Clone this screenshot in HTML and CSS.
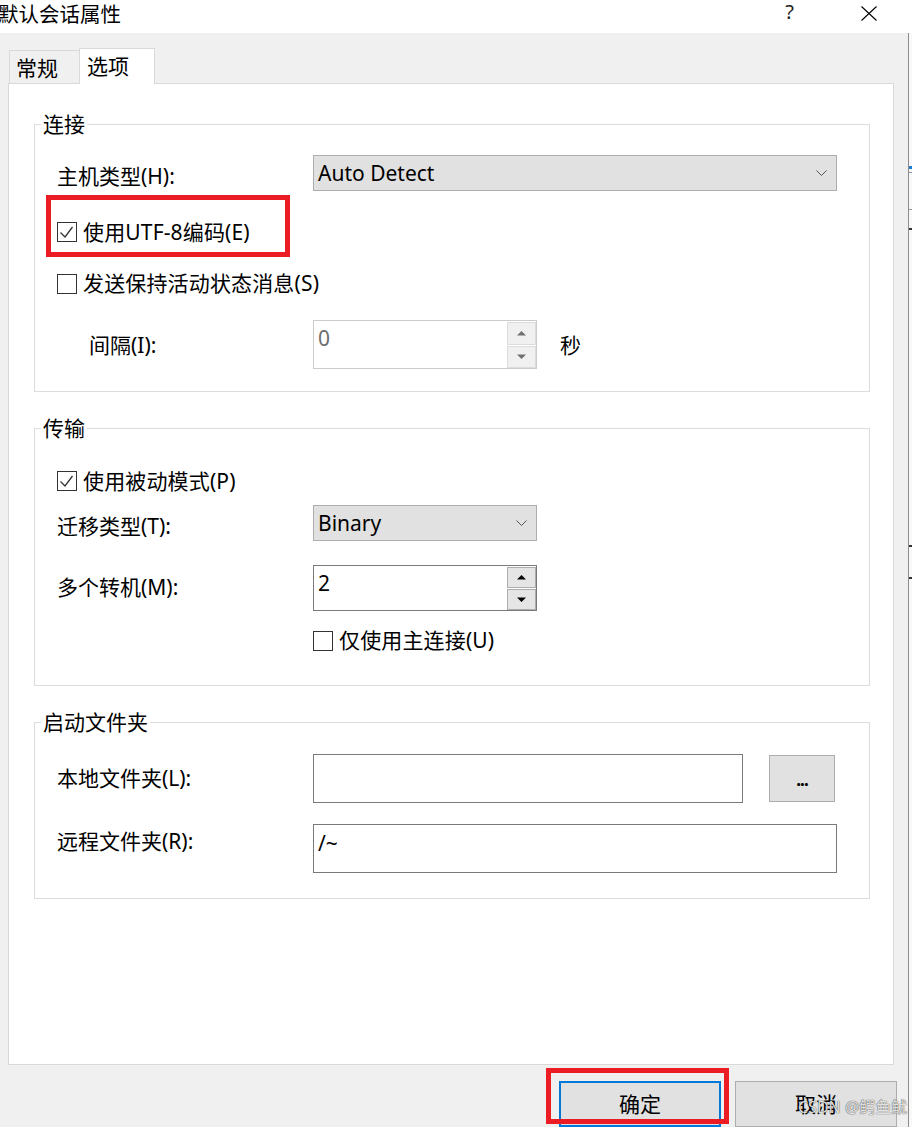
FILE: index.html
```html
<!DOCTYPE html>
<html lang="zh-CN">
<head>
<meta charset="utf-8">
<title>默认会话属性</title>
<link rel="stylesheet" href="styles.css">
</head>
<body>
<div class="titlebar">
  <div class="title">默认会话属性</div>
  <div class="help">?</div>
  <svg class="close" width="16" height="15" viewBox="0 0 16 15"><path d="M0.5 0.5 L15.5 14.5 M15.5 0.5 L0.5 14.5" stroke="#000" stroke-width="1.1" fill="none"/></svg>
</div>
<div class="main">
  <div class="dialog">
    <div class="tabs">
      <div class="tab">常规</div>
      <div class="tab active">选项</div>
    </div>
    <div class="panel">
      <div class="group g1">
        <span class="gtitle">连接</span>
        <div class="row">
          <span class="lbl lbl-host">主机类型(H):</span>
          <div class="combo combo-host"><span>Auto Detect</span><svg class="chev" width="11" height="6" viewBox="0 0 11 6"><path d="M0.5 0.5 L5.5 5.5 L10.5 0.5" stroke="#555" stroke-width="1" fill="none"/></svg></div>
        </div>
        <div class="row row-utf8">
          <span class="cb"><svg width="18" height="18" viewBox="0 0 18 18"><path d="M2.5 9.5 L7 14 L14.5 4" stroke="#333" stroke-width="1.3" fill="none"/></svg></span>
          <span class="cb-text">使用UTF-8编码(E)</span>
        </div>
        <div class="row row-keep">
          <span class="cb cb-low"></span>
          <span class="cb-text">发送保持活动状态消息(S)</span>
        </div>
        <div class="row row-interval">
          <span class="lbl lbl-interval">间隔(I):</span>
          <div class="spin spin-disabled spin-tall">
            <span class="spin-text">0</span>
            <div class="spin-btns">
              <span class="sbtn"><svg width="9" height="5" viewBox="0 0 9 5"><path d="M0 4.5 L4.5 0 L9 4.5 Z" fill="#707070"/></svg></span>
              <span class="sbtn"><svg width="9" height="5" viewBox="0 0 9 5"><path d="M0 0.5 L4.5 5 L9 0.5 Z" fill="#707070"/></svg></span>
            </div>
          </div>
          <span class="sec">秒</span>
        </div>
      </div>

      <div class="group g2">
        <span class="gtitle">传输</span>
        <div class="row">
          <span class="cb"><svg width="18" height="18" viewBox="0 0 18 18"><path d="M2.5 9.5 L7 14 L14.5 4" stroke="#333" stroke-width="1.3" fill="none"/></svg></span>
          <span class="cb-text">使用被动模式(P)</span>
        </div>
        <div class="row row-type">
          <span class="lbl lbl-type">迁移类型(T):</span>
          <div class="combo combo-type"><span>Binary</span><svg class="chev" width="11" height="6" viewBox="0 0 11 6"><path d="M0.5 0.5 L5.5 5.5 L10.5 0.5" stroke="#555" stroke-width="1" fill="none"/></svg></div>
        </div>
        <div class="row row-multi">
          <span class="lbl lbl-multi">多个转机(M):</span>
          <div class="spin">
            <span class="spin-text">2</span>
            <div class="spin-btns">
              <span class="sbtn"><svg width="9" height="5" viewBox="0 0 9 5"><path d="M0 4.5 L4.5 0 L9 4.5 Z" fill="#000"/></svg></span>
              <span class="sbtn"><svg width="9" height="5" viewBox="0 0 9 5"><path d="M0 0.5 L4.5 5 L9 0.5 Z" fill="#000"/></svg></span>
            </div>
          </div>
        </div>
        <div class="row row-main">
          <span class="cb cb-low"></span>
          <span class="cb-text">仅使用主连接(U)</span>
        </div>
      </div>

      <div class="group g3">
        <span class="gtitle">启动文件夹</span>
        <div class="row">
          <span class="lbl lbl-local">本地文件夹(L):</span>
          <div class="field field-local"></div>
          <div class="browse">...</div>
        </div>
        <div class="row row-remote">
          <span class="lbl lbl-remote">远程文件夹(R):</span>
          <div class="field field-remote">/~</div>
        </div>
      </div>
    </div>
    <div class="actions">
      <div class="btn btn-default">确定</div>
      <div class="btn">取消</div>
    </div>
  </div>
  <div class="edge">
    <span class="edge-blue"></span>
    <span class="edge-gray e1"></span>
    <span class="edge-gray e2"></span>
    <span class="edge-dark e3"></span>
    <span class="edge-dark e4"></span>
    <span class="edge-dark e5"></span>
  </div>
</div>
<div class="mark mark1"></div>
<div class="mark mark2"></div>
<div class="watermark">CSDN @鳄鱼鱿</div>
</body>
</html>
```
FILE: styles.css
```css
* { box-sizing: border-box; }
html, body { margin: 0; padding: 0; }
body {
  width: 912px;
  height: 1127px;
  overflow: hidden;
  position: relative;
  background: #f0f0f0;
  font-family: "Noto Sans", "Noto Sans CJK SC", sans-serif;
  font-size: 21px;
  line-height: 24px;
  color: #000;
}

/* title bar */
.titlebar {
  height: 33px;
  background: #fff;
  display: flex;
  align-items: flex-start;
}
.title {
  margin-left: -2px;
  padding-top: 2px;
  font-size: 20.5px;
}
.help {
  margin-left: auto;
  font-size: 20px;
  line-height: 24px;
  color: #222;
}
.close {
  margin-left: 67px;
  margin-right: 35px;
  margin-top: 6px;
}

/* main area */
.main {
  display: flex;
  height: 1094px;
}
.dialog {
  width: 908px;
  flex: none;
  padding-top: 15px;
}
.edge {
  flex: 1;
  border-left: 1px solid #8c8c8c;
  background: #f8f8f8;
  position: relative;
}
.edge-blue, .edge-gray, .edge-dark {
  position: absolute;
  left: 0;
  right: 0;
}
.edge-blue { top: 133px; height: 3px; background: #1a7fd4; }
.edge-gray { height: 1px; background: #9a9a9a; }
.e1 { top: 139px; }
.e2 { top: 176px; }
.edge-dark { height: 2px; background: #333; }
.e3 { top: 195px; }
.e4 { top: 512px; }
.e5 { top: 544px; }

/* tabs */
.tabs {
  display: flex;
  align-items: flex-end;
  height: 35px;
  margin-left: 9px;
}
.tab {
  height: 33px;
  width: 70px;
  border: 1px solid #d9d9d9;
  border-right: none;
  border-bottom: none;
  padding: 5px 0 0 6px;
  background: #f0f0f0;
}
.tab.active {
  position: relative;
  z-index: 1;
  width: 76px;
  height: 36px;
  margin-bottom: -1px;
  border-right: 1px solid #d9d9d9;
  background: #fff;
  padding: 5px 0 0 7px;
}

/* panel */
.panel {
  margin-left: 8px;
  width: 886px;
  height: 982px;
  border: 1px solid #d9d9d9;
  background: #fff;
  padding: 40px 0 0 25px;
}

.group {
  position: relative;
  width: 836px;
  border: 1px solid #dcdcdc;
  padding-left: 22px;
}
.g1 { height: 268px; padding-top: 30px; }
.g2 { height: 258px; margin-top: 36px; padding-top: 40px; }
.g3 { height: 177px; margin-top: 36px; padding-top: 31px; }
.gtitle {
  position: absolute;
  top: -13px;
  left: 6px;
  padding: 0 2px;
  background: #fff;
}

.row {
  display: flex;
  align-items: flex-start;
}
.lbl {
  width: 256px;
  flex: none;
}
.lbl-host { padding-top: 9px; }
.lbl-interval { padding-left: 32px; padding-top: 13px; }
.lbl-type { padding-top: 9px; }
.lbl-multi { padding-top: 10px; }
.lbl-local { padding-top: 12px; }
.lbl-remote { padding-top: 5px; }

.row-utf8 { margin-top: 29px; }
.row-keep { margin-top: 27px; }
.row-interval { margin-top: 25px; }
.row-type { margin-top: 12px; }
.row-multi { margin-top: 24px; }
.row-main { margin-top: 17px; padding-left: 256px; }
.row-remote { margin-top: 21px; }

/* checkbox */
.cb {
  width: 20px;
  height: 20px;
  flex: none;
  margin-top: 2px;
  border: 1px solid #333;
  background: #fff;
  display: flex;
}
.cb-low { margin-top: 3px; }
.cb-text { margin-left: 6px; letter-spacing: 0.15px; }

/* combo */
.combo {
  height: 36px;
  border: 1px solid #adadad;
  background: #e1e1e1;
  display: flex;
  align-items: center;
  justify-content: space-between;
  padding: 0 9px 0 4px;
}
.combo-host { width: 524px; }
.combo-type { width: 224px; }

/* spin */
.spin {
  width: 224px;
  height: 46px;
  border: 1px solid #7a7a7a;
  background: #fff;
  display: flex;
}
.spin-tall { height: 49px; }
.spin-text {
  flex: 1;
  padding: 5px 0 0 4px;
}
.spin-btns {
  width: 29px;
  flex: none;
  display: flex;
  flex-direction: column;
  gap: 1px;
  padding-top: 1px;
}
.sbtn {
  flex: 1;
  border: 1px solid #adadad;
  background: #e5e5e5;
  display: flex;
  align-items: center;
  justify-content: center;
}
.spin-disabled { border-color: #cccccc; }
.spin-disabled .spin-text { color: #6d6d6d; }
.spin-disabled .sbtn { border-color: #dcdcdc; background: #f0f0f0; }
.sec { margin-left: 23px; padding-top: 13px; }

/* text fields */
.field {
  height: 49px;
  border: 1px solid #7a7a7a;
  background: #fff;
  padding: 6px 0 0 4px;
}
.field-local { width: 430px; }
.field-remote { width: 524px; }
.browse {
  margin-left: 26px;
  margin-top: 1px;
  width: 66px;
  height: 47px;
  border: 1px solid #adadad;
  background: #e1e1e1;
  text-align: center;
  line-height: 48px;
  font-weight: 700;
  font-size: 17px;
  letter-spacing: -1px;
}

/* dialog buttons */
.actions {
  display: flex;
  gap: 14px;
  margin-top: 16px;
  padding-left: 559px;
}
.btn {
  width: 162px;
  height: 46px;
  border: 1px solid #adadad;
  background: #e1e1e1;
  text-align: center;
  padding-top: 10px;
}
.btn-default {
  border: 2px solid #0078d7;
  padding-top: 9px;
}

/* annotation overlays */
.mark {
  position: absolute;
  border: 5px solid #ec1c24;
}
.mark1 { left: 46px; top: 195px; width: 244px; height: 62px; }
.mark2 { left: 546px; top: 1068px; width: 183px; height: 56px; }

.watermark {
  position: absolute;
  left: 798px;
  top: 1097px;
  font-size: 16px;
  line-height: 20px;
  color: rgba(255, 255, 255, 0.85);
  text-shadow: 0 0 1px rgba(0, 0, 0, 0.7), 0 0 1px rgba(0, 0, 0, 0.4);
}
```
